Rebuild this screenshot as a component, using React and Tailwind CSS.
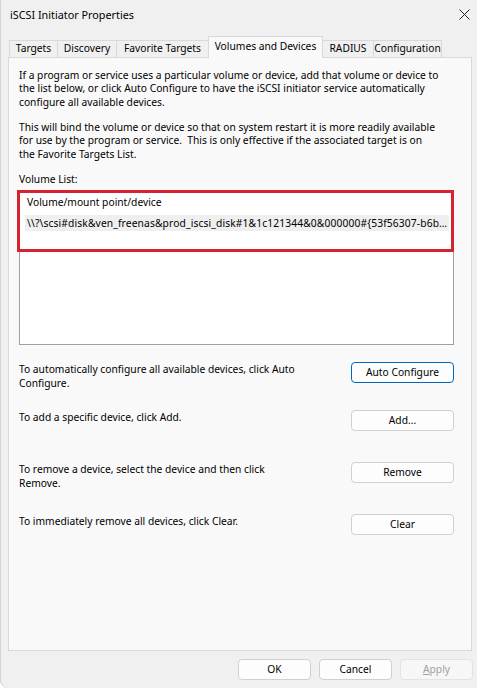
import React from "react";

function Btn({ children, focused, disabled, className = "" }) {
  return (
    <div
      className={
        "h-[21px] flex items-center justify-center rounded-[4px] border " +
        (focused
          ? "border-[#0067c0] bg-[#fdfdfd] "
          : disabled
          ? "border-[#e3e3e3] bg-[#f7f7f7] text-[#a0a0a0] "
          : "border-[#d0d0d0] bg-[#fdfdfd] ") +
        className
      }
    >
      {children}
    </div>
  );
}

function Row({ h, children, btn, focused }) {
  return (
    <div className={"flex justify-between items-start " + h}>
      <div className="pt-[1px] whitespace-nowrap">{children}</div>
      <Btn focused={focused} className="w-[103px]">
        {btn}
      </Btn>
    </div>
  );
}

export default function App() {
  const tabBase = "h-[17px] flex items-center justify-center border-[#d9d9d9] bg-[#f0f0f0] whitespace-nowrap";
  return (
    <div className="w-[477px] h-[688px] bg-[#f0f0f0] rounded-bl-[8px] shadow-[inset_1px_0_0_#d4d4d4] overflow-hidden text-black text-[10.25px] leading-[13.33px] [font-family:'Noto_Sans',sans-serif]">
      {/* Title bar */}
      <div className="h-[29px] flex items-center justify-between pl-[10px] pr-[7px]">
        <span className="text-[10.8px]">iSCSI Initiator Properties</span>
        <svg width="11" height="11" viewBox="0 0 11 11">
          <path d="M0.5 0.5L10.5 10.5M10.5 0.5L0.5 10.5" stroke="#1f1f1f" strokeWidth="1" />
        </svg>
      </div>

      {/* Tabs */}
      <div className="mt-[7px] ml-[9px] flex items-end h-[21px]">
        <div className={tabBase + " w-[48px] border-l border-t"}>Targets</div>
        <div className={tabBase + " w-[59px] border-l border-t"}>Discovery</div>
        <div className={tabBase + " w-[92px] border-l border-t"}>Favorite Targets</div>
        <div className="relative z-10 -mb-px h-[22px] w-[115px] flex items-center justify-center pb-[2px] border-l border-t border-r border-[#d9d9d9] bg-[#f9f9f9] whitespace-nowrap">
          Volumes and Devices
        </div>
        <div className={tabBase + " w-[51px] border-t border-r"}>RADIUS</div>
        <div className={tabBase + " w-[68px] border-t border-r"}>Configuration</div>
      </div>

      {/* Panel */}
      <div className="ml-[8px] w-[464px] h-[594px] border border-[#d9d9d9] bg-[#f9f9f9] pt-[11px] pl-[10px]">
        <p className="whitespace-nowrap">
          If a program or service uses a particular volume or device, add that volume or device to
          <br />
          the list below, or click Auto Configure to have the iSCSI initiator service automatically
          <br />
          configure all available devices.
        </p>
        <p className="mt-[12px] whitespace-nowrap">
          This will bind the volume or device so that on system restart it is more readily available
          <br />
          for use by the program or service.&nbsp; This is only effective if the associated target is on
          <br />
          the Favorite Targets List.
        </p>
        <div className="mt-[12px]">Volume List:</div>

        <div className="relative mt-[5px] w-[435px] h-[154px] border border-[#a0a0a0] bg-white">
          <div className="h-[23px] pl-[7px] pt-[4px]">Volume/mount point/device</div>
          <div className="ml-[5px] mr-[4px] h-[16px] bg-[#efefef] pl-[2px] leading-[16px] tracking-[0.13px] whitespace-nowrap">
            {"\\\\?\\scsi#disk&ven_freenas&prod_iscsi_disk#1&1c121344&0&000000#{53f56307-b6b\u2026"}
          </div>
          <div className="absolute -left-[3px] -top-[2px] w-[437px] h-[62px] border-[3px] border-[#d7232f]" />
        </div>

        <div className="mt-[17px] w-[435px] flex flex-col">
          <Row h="h-[48px]" btn="Auto Configure" focused>
            To automatically configure all available devices, click Auto
            <br />
            Configure.
          </Row>
          <Row h="h-[52px]" btn="Add...">
            To add a specific device, click Add.
          </Row>
          <Row h="h-[52px]" btn="Remove">
            To remove a device, select the device and then click
            <br />
            Remove.
          </Row>
          <Row h="h-[21px]" btn="Clear">
            To immediately remove all devices, click Clear.
          </Row>
        </div>
      </div>

      {/* Bottom buttons */}
      <div className="mt-[8px] flex justify-end gap-[8px] pr-[4px]">
        <Btn className="w-[73px]">OK</Btn>
        <Btn className="w-[73px]">Cancel</Btn>
        <Btn disabled className="w-[73px]">
          <span>
            <span className="underline">A</span>pply
          </span>
        </Btn>
      </div>
    </div>
  );
}
